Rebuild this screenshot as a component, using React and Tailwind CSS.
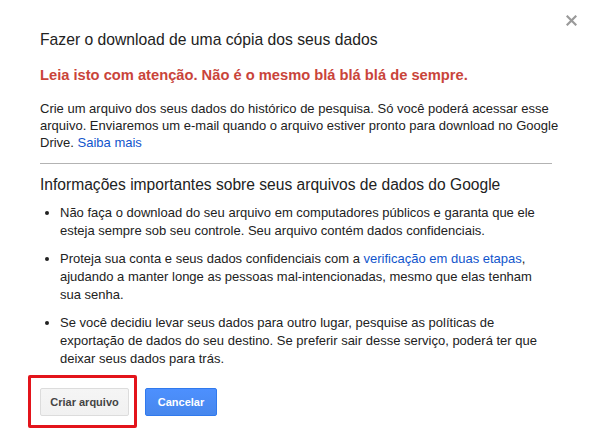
import React from 'react'

const CloseIcon = () => (
    <svg width="11" height="11" viewBox="0 0 11 11" className="block">
        <path d="M1.5 1.5 L9.5 9.5 M9.5 1.5 L1.5 9.5" stroke="#9a9a9a" strokeWidth="2.2" strokeLinecap="square" />
    </svg>
)

const tips = [
    <>Não faça o download do seu arquivo em computadores públicos e garanta que ele esteja sempre sob seu controle. Seu arquivo contém dados confidenciais.</>,
    <>Proteja sua conta e seus dados confidenciais com a <a href="#" className="text-[#1155cc]">verificação em duas etapas</a>, ajudando a manter longe as pessoas mal-intencionadas, mesmo que elas tenham sua senha.</>,
    <>Se você decidiu levar seus dados para outro lugar, pesquise as políticas de exportação de dados do seu destino. Se preferir sair desse serviço, poderá ter que deixar seus dados para trás.</>,
]

const App = () => {
    return (
        <div className="relative w-[590px] h-[446px] bg-white overflow-hidden font-['Arial','Liberation_Sans',sans-serif] text-[#222]">
            <button className="absolute top-[15px] right-[13px] cursor-pointer">
                <CloseIcon />
            </button>

            <div className="pl-[40px] pr-[38px] pt-[30px]">
                <h1 className="text-[15.7px] leading-[20px] font-normal">
                    Fazer o download de uma cópia dos seus dados
                </h1>

                <p className="mt-[16px] text-[14.7px] leading-[18px] font-bold text-[#c9443a]">
                    Leia isto com atenção. Não é o mesmo blá blá blá de sempre.
                </p>

                <p className="mt-[16px] w-[522px] text-[13px] leading-[17px]">
                    Crie um arquivo dos seus dados do histórico de pesquisa. Só você poderá acessar esse
                    arquivo. Enviaremos um e-mail quando o arquivo estiver pronto para download no Google
                    Drive. <a href="#" className="text-[#1155cc]">Saiba mais</a>
                </p>

                <div className="mt-[12px] h-px bg-[#b3b3b3]" />

                <h2 className="mt-[11px] text-[15.6px] leading-[20px] font-normal">
                    Informações importantes sobre seus arquivos de dados do Google
                </h2>

                <ul className="mt-[9px] pl-[20px] list-disc flex flex-col gap-[10px] text-[13px] leading-[18px]">
                    {tips.map((t, i) => (
                        <li key={i}>{t}</li>
                    ))}
                </ul>

                <div className="mt-[20px] flex items-center gap-[16px]">
                    <div className="relative">
                        <button className="w-[89px] h-[28px] rounded-[2px] border border-[#dcdcdc] bg-gradient-to-b from-[#f5f5f5] to-[#f1f1f1] text-[11px] font-bold text-[#444]">
                            Criar arquivo
                        </button>
                        {/* destaque vermelho */}
                        <span className="absolute -left-[12px] -right-[8px] -top-[13px] -bottom-[12px] border-[3px] border-[#e3141b] rounded-[2px] pointer-events-none" />
                    </div>
                    <button className="w-[72px] h-[28px] rounded-[2px] border border-[#3079ed] bg-gradient-to-b from-[#4d90fe] to-[#4787ed] text-[11px] font-bold text-white">
                        Cancelar
                    </button>
                </div>
            </div>
        </div>
    )
}

export default App
